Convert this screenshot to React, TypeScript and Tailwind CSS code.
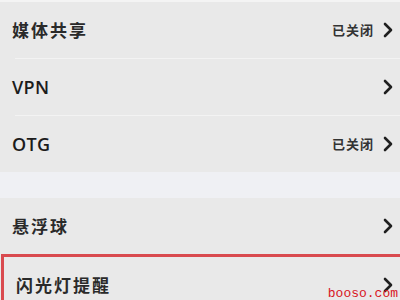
const font = { fontFamily: '"Noto Sans CJK SC", "Noto Sans", sans-serif' };

type RowProps = {
  label: string;
  value?: string;
  latin?: boolean;
};

const Chevron = () => (
  <svg width="10" height="16" viewBox="0 0 10 16" className="shrink-0">
    <path d="M2 2 L8 8 L2 14" fill="none" stroke="#1f1f1f" strokeWidth="2.6" strokeLinecap="round" strokeLinejoin="round" />
  </svg>
);

const Row = ({ label, value, latin }: RowProps) => (
  <div className="flex h-[56px] items-center pl-[12px] pr-[7px]">
    <span
      className={latin ? 'text-[18px] font-semibold text-[#1c1c1c] tracking-[0.3px]' : 'text-[17px] font-bold text-[#2a2a2a] tracking-[2px]'}
      style={{ fontFamily: latin ? '"Open Sans", "Noto Sans", sans-serif' : font.fontFamily }}
    >
      {label}
    </span>
    <div className="ml-auto flex items-center gap-[9px]">
      {value && (
        <span className="text-[13px] font-bold text-[#333] tracking-[1px]" style={font}>
          {value}
        </span>
      )}
      <Chevron />
    </div>
  </div>
);

const Divider = () => (
  <div className="pl-[15px]">
    <div className="h-px bg-[#f3f3f3]" />
  </div>
);

export default function App() {
  return (
    <div className="relative h-[300px] w-[400px] overflow-hidden bg-[#e9e9e9]">
      <div className="h-[2px] bg-[#f4f4f4]" />
      <Row label="媒体共享" value="已关闭" />
      <Divider />
      <Row label="VPN" latin />
      <Divider />
      <Row label="OTG" value="已关闭" latin />
      <div className="h-[26px] bg-[#eff0f4]" />
      <Row label="悬浮球" />
      <div className="ml-[1px] border-l-[3px] border-t-[3px] border-[#d94a4f]">
        <Row label="闪光灯提醒" />
      </div>
      <span
        className="absolute bottom-[-3px] right-[2px] text-[13px] text-[#d8161e]"
        style={{ fontFamily: '"Liberation Mono", monospace' }}
      >
        booso.com
      </span>
    </div>
  );
}
